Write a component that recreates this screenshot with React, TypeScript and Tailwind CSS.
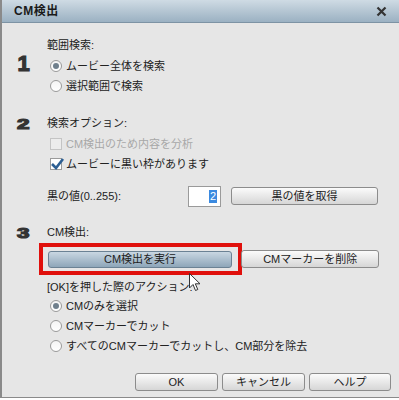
import React from 'react'

const font = { fontFamily: '"Liberation Sans", "Noto Sans CJK JP", sans-serif' }

function Radio({ checked, label }: { checked?: boolean; label: string }) {
  return (
    <div className="flex items-center h-[20px] pl-[3px]">
      <span className="w-[12px] h-[12px] rounded-full border border-[#9a9a9a] bg-gradient-to-b from-[#f4f4f4] to-white flex items-center justify-center">
        {checked && <span className="w-[6px] h-[6px] rounded-full bg-[#6f7f8c]" />}
      </span>
      <span className="ml-[4px] text-[11px] text-[#222]">{label}</span>
    </div>
  )
}

function Check({ checked, disabled, label }: { checked?: boolean; disabled?: boolean; label: string }) {
  return (
    <div className="flex items-center h-[20px] pl-[3px]">
      <span
        className={`relative w-[12px] h-[12px] border ${disabled ? 'border-[#c4c4c4] bg-[#ececec]' : 'border-[#9a9a9a] bg-white'}`}
      >
        {checked && (
          <svg className="absolute -left-[1px] -top-[2px]" width="15" height="14" viewBox="0 0 15 14">
            <path d="M2 7 L6 11 L13 2" fill="none" stroke="#2d5f93" strokeWidth="2.6" />
          </svg>
        )}
      </span>
      <span className={`ml-[4px] text-[11px] ${disabled ? 'text-[#a8a8a8]' : 'text-[#222]'}`}>{label}</span>
    </div>
  )
}

function Btn({ children, className = '' }: { children: React.ReactNode; className?: string }) {
  return (
    <div
      className={`h-[18px] flex items-center justify-center rounded-[3px] border border-[#8c8c8c] bg-gradient-to-b from-[#fbfbfb] to-[#d6d6d6] text-[11px] text-[#222] ${className}`}
    >
      {children}
    </div>
  )
}

function Num({ n, tall }: { n: string; tall?: boolean }) {
  return (
    <div className="w-[45px] flex justify-center pr-[2px]">
      <span
        className={`font-bold text-[#333] leading-none [-webkit-text-stroke:1.2px_#333] ${tall ? 'text-[22px]' : 'text-[15px] scale-x-[1.5] scale-y-[0.95]'}`}
        style={{ fontFamily: '"Liberation Sans", sans-serif' }}
      >
        {n}
      </span>
    </div>
  )
}

export default function App() {
  return (
    <div className="w-[399px] h-[400px] bg-white" style={font}>
      <div className="w-[399px] h-[398px] border-l-2 border-b border-[#8a8a8a] bg-[#e6e6e6] flex flex-col">
        {/* title bar */}
        <div className="h-[23px] shrink-0 flex items-center justify-between pl-[12px] pr-[12px] bg-gradient-to-b from-[#cfdbe4] to-[#9bb1c2] border-b border-[#7d93a4]">
          <span className="text-[12px] font-bold text-[#1a1a1a] tracking-[0.5px]">CM検出</span>
          <svg width="11" height="11" viewBox="0 0 11 11">
            <path d="M1.5 1.5 L9.5 9.5 M9.5 1.5 L1.5 9.5" stroke="#333" strokeWidth="2.2" />
          </svg>
        </div>

        {/* section 1 */}
        <div className="flex pt-[14px]">
          <div className="flex flex-col">
            <div className="h-[16px]" />
            <Num n="1" tall />
          </div>
          <div className="flex flex-col">
            <div className="h-[16px] flex items-center text-[11px] text-[#222]">範囲検索:</div>
            <div className="h-[3px]" />
            <Radio checked label="ムービー全体を検索" />
            <Radio label="選択範囲で検索" />
          </div>
        </div>

        {/* section 2 */}
        <div className="flex pt-[19px]">
          <div className="flex flex-col">
            <div className="h-[16px] flex items-center">
              <Num n="2" />
            </div>
          </div>
          <div className="flex flex-col w-[332px]">
            <div className="h-[16px] flex items-center text-[11px] text-[#222]">検索オプション:</div>
            <div className="h-[3px]" />
            <Check disabled label="CM検出のため内容を分析" />
            <Check checked label="ムービーに黒い枠があります" />
            <div className="h-[11px]" />
            <div className="h-[22px] flex items-center">
              <span className="text-[11px] text-[#222] w-[141px]">黒の値(0..255):</span>
              <div className="w-[33px] h-[21px] border border-[#9a9a9a] bg-white flex items-center justify-end pr-[3px]">
                <span className="text-[11px] leading-[13px] bg-[#3b8ae0] text-white px-[1px]">2</span>
              </div>
              <Btn className="ml-[10px] w-[147px]">黒の値を取得</Btn>
            </div>
          </div>
        </div>

        {/* section 3 */}
        <div className="flex pt-[17px]">
          <div className="flex flex-col">
            <div className="h-[16px] flex items-center">
              <Num n="3" />
            </div>
          </div>
          <div className="flex flex-col w-[332px]">
            <div className="h-[16px] flex items-center text-[11px] text-[#222]">CM検出:</div>
            <div className="h-[3px]" />
            <div className="relative flex items-center h-[32px] -ml-[8px]">
              <div className="w-[204px] h-[32px] border-[4px] border-[#e0100c] flex items-center pl-[5px]">
                <div className="w-[184px] h-[17px] flex items-center justify-center rounded-[3px] border border-[#6b8294] bg-gradient-to-b from-[#c9d7e2] to-[#8ea6b9] text-[11px] text-[#222]">
                  CM検出を実行
                </div>
              </div>
              <Btn className="-ml-[1px] w-[138px] h-[17px]">CMマーカーを削除</Btn>
              <svg className="absolute left-[150px] top-[30px]" width="12" height="19" viewBox="0 0 12 19">
                <path d="M0.5 0.5 L0.5 15 L4 11.5 L6.5 17.5 L8.8 16.5 L6.3 10.8 L11 10.8 Z" fill="#fff" stroke="#333" strokeWidth="1" />
              </svg>
            </div>
            <div className="h-[4px]" />
            <div className="h-[16px] flex items-center text-[11px] text-[#222]">[OK]を押した際のアクション:</div>
            <div className="h-[1px]" />
            <Radio checked label="CMのみを選択" />
            <Radio label="CMマーカーでカット" />
            <Radio label="すべてのCMマーカーでカットし、CM部分を除去" />
          </div>
        </div>

        {/* footer buttons */}
        <div className="flex justify-end gap-[4px] pr-[8px] pt-[17px]">
          <Btn className="w-[83px]">OK</Btn>
          <Btn className="w-[83px]">キャンセル</Btn>
          <Btn className="w-[82px]">ヘルプ</Btn>
        </div>
      </div>
    </div>
  )
}
